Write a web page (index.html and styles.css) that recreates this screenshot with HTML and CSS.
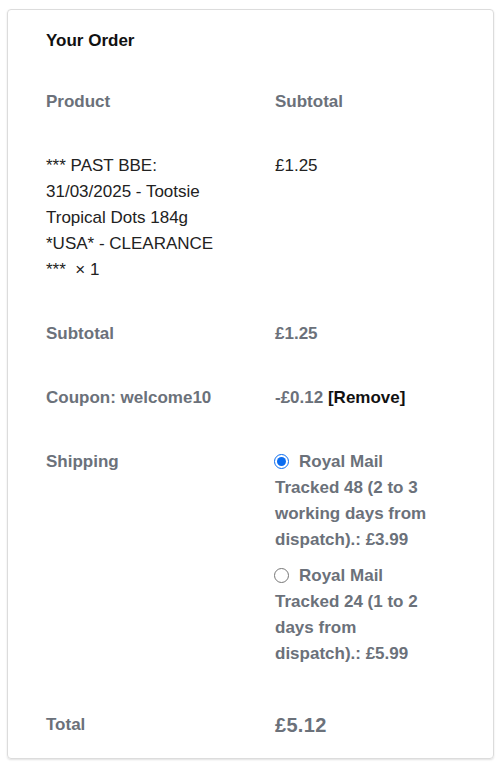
FILE: index.html
```html
<!DOCTYPE html>
<html>

<head>
    <title>Your Order</title>
    <link rel="stylesheet" href="styles.css">
</head>

<body>

    <div class="order-card">
        <h3 class="order-title">Your Order</h3>
        <table class="order-table">
            <thead>
                <tr>
                    <th>Product</th>
                    <th>Subtotal</th>
                </tr>
            </thead>
            <tbody>
                <tr class="cart-item">
                    <td>*** PAST BBE: 31/03/2025 - Tootsie Tropical Dots 184g *USA* - CLEARANCE ***&nbsp; ×&nbsp;1</td>
                    <td>£1.25</td>
                </tr>
            </tbody>
            <tfoot>
                <tr>
                    <th>Subtotal</th>
                    <td class="amount">£1.25</td>
                </tr>
                <tr>
                    <th>Coupon: welcome10</th>
                    <td class="amount">-£0.12 <a href="#" class="remove-coupon">[Remove]</a></td>
                </tr>
                <tr class="shipping">
                    <th>Shipping</th>
                    <td>
                        <ul class="shipping-methods">
                            <li>
                                <label><input type="radio" name="shipping" checked>Royal Mail Tracked 48 (2 to 3 working days from dispatch).: £3.99</label>
                            </li>
                            <li>
                                <label><input type="radio" name="shipping">Royal Mail Tracked 24 (1 to 2 days from dispatch).: £5.99</label>
                            </li>
                        </ul>
                    </td>
                </tr>
                <tr class="order-total">
                    <th>Total</th>
                    <td class="amount">£5.12</td>
                </tr>
            </tfoot>
        </table>
    </div>

</body>

</html>
```

FILE: styles.css
```css
body {
    font-family: "Liberation Sans", Arial, sans-serif;
    font-size: 17px;
    line-height: 26px;
    color: #222;
    background: #fff;
    margin: 0;
    padding: 0;
}

.order-card {
    width: 409px;
    margin: 9px 6px 9px 7px;
    padding: 18px 38px 6px 38px;
    border: 1px solid #dcdcdc;
    border-radius: 4px;
    box-shadow: 0 1px 2px rgba(0, 0, 0, 0.12);
}

.order-title {
    font-size: 17px;
    line-height: 26px;
    font-weight: bold;
    color: #111;
    margin: 0 0 16px 0;
}

.order-table {
    width: 458px;
    border-collapse: collapse;
    table-layout: fixed;
}

.order-table th,
.order-table td {
    width: 171px;
    padding: 19px 58px 19px 0;
    text-align: left;
    vertical-align: top;
}

.order-table th {
    font-weight: bold;
    color: #6b717a;
}

.order-table .amount {
    font-weight: bold;
    color: #6b717a;
}

.remove-coupon {
    color: #111;
    text-decoration: none;
}

.shipping-methods {
    list-style: none;
    margin: 0;
    padding: 0;
}

.shipping-methods li {
    margin-bottom: 10px;
    font-weight: bold;
    color: #6b717a;
}

.shipping-methods li:last-child {
    margin-bottom: 0;
}

.shipping-methods input {
    width: 15px;
    height: 15px;
    margin: 0 10px 0 -1px;
    vertical-align: -2px;
    accent-color: #0a6cf0;
}

.order-total th,
.order-total td {
    padding-top: 26px;
    padding-bottom: 14px;
}

.order-total .amount {
    font-size: 20px;
    letter-spacing: 0.3px;
}
```
